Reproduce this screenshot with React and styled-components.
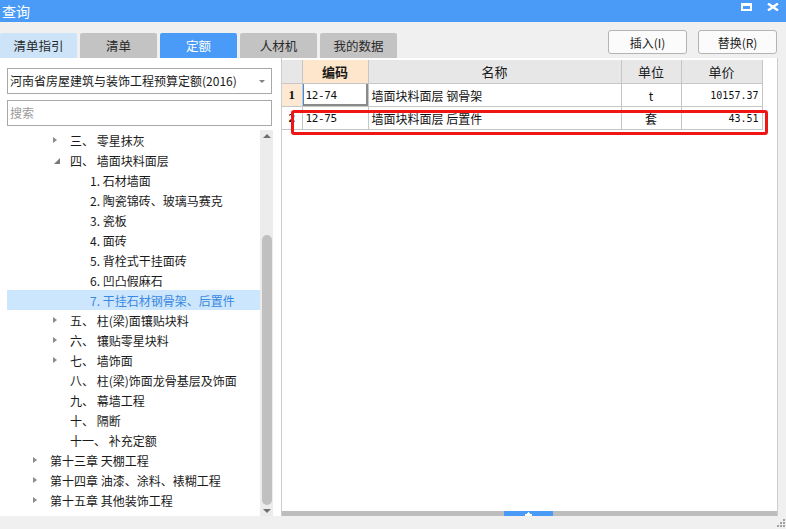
import React from "react";
import styled, { createGlobalStyle } from "styled-components";

const GlobalStyle = createGlobalStyle`
  body {
    margin: 0;
    background: #f0f0f0;
    font-family: "Noto Sans CJK SC", "Noto Sans", sans-serif;
    color: #1a1a1a;
  }
`;

const BLUE = "#4a9bf8";

const treeData = [
  { level: 2, label: "三、 零星抹灰", arrow: "closed" },
  { level: 2, label: "四、 墙面块料面层", arrow: "open" },
  { level: 3, label: "1. 石材墙面" },
  { level: 3, label: "2. 陶瓷锦砖、玻璃马赛克" },
  { level: 3, label: "3. 瓷板" },
  { level: 3, label: "4. 面砖" },
  { level: 3, label: "5. 背栓式干挂面砖" },
  { level: 3, label: "6. 凹凸假麻石" },
  { level: 3, label: "7. 干挂石材钢骨架、后置件", selected: true },
  { level: 2, label: "五、 柱(梁)面镶贴块料", arrow: "closed" },
  { level: 2, label: "六、 镶贴零星块料", arrow: "closed" },
  { level: 2, label: "七、 墙饰面", arrow: "closed" },
  { level: 2, label: "八、 柱(梁)饰面龙骨基层及饰面" },
  { level: 2, label: "九、 幕墙工程" },
  { level: 2, label: "十、 隔断" },
  { level: 2, label: "十一、 补充定额" },
  { level: 1, label: "第十三章 天棚工程", arrow: "closed" },
  { level: 1, label: "第十四章 油漆、涂料、裱糊工程", arrow: "closed" },
  { level: 1, label: "第十五章 其他装饰工程", arrow: "closed" },
];

const rows = [
  { no: 1, code: "12-74", name: "墙面块料面层 钢骨架", unit: "t", price: "10157.37", current: true },
  { no: 2, code: "12-75", name: "墙面块料面层 后置件", unit: "套", price: "43.51" },
];

const tabs = [
  { label: "清单指引", kind: "soft" },
  { label: "清单" },
  { label: "定额", kind: "active" },
  { label: "人材机" },
  { label: "我的数据" },
];

const App = () => {
  return (
    <>
      <GlobalStyle />
      <Window>
        <TitleBar>
          <Title>查询</Title>
          <TitleIcons>
            <svg width="11" height="8" viewBox="0 0 11 8">
              <rect x="1" y="1.5" width="9" height="5.5" fill="none" stroke="#fff" strokeWidth="2" />
              <rect x="0" y="0" width="11" height="3" fill="#fff" />
            </svg>
            <svg width="12" height="8" viewBox="0 0 12 8">
              <path d="M1 0.5 L11 7.5 M11 0.5 L1 7.5" stroke="#fff" strokeWidth="2.4" />
            </svg>
          </TitleIcons>
        </TitleBar>

        <Toolbar>
          <Tabs>
            {tabs.map((t) => (
              <Tab key={t.label} $kind={t.kind}>
                {t.label}
              </Tab>
            ))}
          </Tabs>
          <Actions>
            <Button>插入(I)</Button>
            <Button>替换(R)</Button>
          </Actions>
        </Toolbar>

        <Body>
          <LeftPanel>
            <Combo>
              <span>河南省房屋建筑与装饰工程预算定额(2016)</span>
              <ComboArrow />
            </Combo>
            <Search>搜索</Search>
            <TreeArea>
              <TreeList>
                {treeData.map((n) => (
                  <TreeRow key={n.label} $level={n.level} $selected={n.selected}>
                    <ArrowSlot>
                      {n.arrow === "closed" && <Closed />}
                      {n.arrow === "open" && <Opened />}
                    </ArrowSlot>
                    {n.label}
                  </TreeRow>
                ))}
              </TreeList>
              <VScroll>
                <ScrollUp />
                <VTrack>
                  <VThumb />
                </VTrack>
                <ScrollDown />
              </VScroll>
            </TreeArea>
          </LeftPanel>

          <RightPanel>
            <Grid>
              <colgroup>
                <col width="20" />
                <col width="66" />
                <col width="253" />
                <col width="60" />
                <col width="81" />
              </colgroup>
              <thead>
                <tr>
                  <HeadCell />
                  <HeadCell $accent>编码</HeadCell>
                  <HeadCell>名称</HeadCell>
                  <HeadCell>单位</HeadCell>
                  <HeadCell>单价</HeadCell>
                </tr>
              </thead>
              <tbody>
                {rows.map((r) => (
                  <tr key={r.no}>
                    <RowNo $current={r.current}>{r.no}</RowNo>
                    <CodeCell $focused={r.current}>{r.code}</CodeCell>
                    <Cell>{r.name}</Cell>
                    <Cell $align="center">{r.unit}</Cell>
                    <NumCell>{r.price}</NumCell>
                  </tr>
                ))}
              </tbody>
            </Grid>
            <Highlight />
            <HScroll>
              <HThumb>
                <svg width="7" height="4" viewBox="0 0 7 4">
                  <path d="M3 0 H4 V1 H5 V2 H7 V4 H0 V2 H2 V1 H3 Z" fill="#fff" />
                </svg>
              </HThumb>
            </HScroll>
          </RightPanel>
        </Body>

        <Footer>
          <svg width="10" height="10" viewBox="0 0 10 10">
            <rect x="7" y="1" width="2" height="2" fill="#a0a0a0" />
            <rect x="4" y="4" width="2" height="2" fill="#a0a0a0" />
            <rect x="7" y="4" width="2" height="2" fill="#a0a0a0" />
            <rect x="1" y="7" width="2" height="2" fill="#a0a0a0" />
            <rect x="4" y="7" width="2" height="2" fill="#a0a0a0" />
            <rect x="7" y="7" width="2" height="2" fill="#a0a0a0" />
          </svg>
        </Footer>
      </Window>
    </>
  );
};

const Window = styled.div`
  width: 786px;
  height: 529px;
  display: flex;
  flex-direction: column;
  background: #f0f0f0;
  overflow: hidden;
`;

const TitleBar = styled.div`
  height: 22px;
  flex: none;
  background: ${BLUE};
  display: flex;
  align-items: center;
  justify-content: space-between;
  padding: 0 7px 0 2px;
`;

const Title = styled.div`
  color: #fff;
  font-size: 14px;
  line-height: 22px;
`;

const TitleIcons = styled.div`
  display: flex;
  align-items: center;
  gap: 15px;
  margin-top: -8px;
`;

const Toolbar = styled.div`
  height: 36px;
  flex: none;
  display: flex;
  justify-content: space-between;
  align-items: flex-end;
  padding-right: 9px;
`;

const Tabs = styled.div`
  display: flex;
  gap: 3px;
`;

const tabBg = { soft: "#cde4f8", active: BLUE };

const Tab = styled.div`
  width: 77px;
  height: 25px;
  border-radius: 2px 2px 0 0;
  background: ${(p) => tabBg[p.$kind] || "#c3c3c3"};
  color: ${(p) => (p.$kind === "active" ? "#fff" : "#2a2a2a")};
  font-size: 12.5px;
  line-height: 25px;
  text-align: center;
`;

const Actions = styled.div`
  display: flex;
  gap: 11px;
  align-self: flex-start;
  margin-top: 8px;
`;

const Button = styled.button`
  width: 79px;
  height: 24px;
  border: 1px solid #b4b4b4;
  border-radius: 3px;
  background: #fbfbfb;
  font-family: "Noto Sans CJK SC", "Noto Sans", sans-serif;
  font-size: 12px;
  color: #222;
  padding: 0;
`;

const Body = styled.div`
  flex: 1;
  display: flex;
  min-height: 0;
  padding-right: 8px;
`;

const LeftPanel = styled.div`
  width: 281px;
  flex: none;
  background: #fff;
  display: flex;
  flex-direction: column;
  padding: 10px 8px 0 7px;
  box-sizing: border-box;
`;

const Field = styled.div`
  height: 26px;
  border: 1px solid #a8a8a8;
  box-sizing: border-box;
  font-size: 12px;
  line-height: 24px;
  padding-left: 2px;
  margin-right: 1px;
`;

const Combo = styled(Field)`
  display: flex;
  justify-content: space-between;
  align-items: center;
  color: #1a1a1a;
  padding-right: 6px;
`;

const ComboArrow = styled.span`
  width: 0;
  height: 0;
  border-left: 3px solid transparent;
  border-right: 3px solid transparent;
  border-top: 3px solid #808080;
`;

const Search = styled(Field)`
  margin-top: 6px;
  color: #9a9a9a;
`;

const TreeArea = styled.div`
  flex: 1;
  display: flex;
  margin-top: 4px;
  min-height: 0;
`;

const TreeList = styled.div`
  flex: 1;
  overflow: hidden;
`;

const TreeRow = styled.div`
  height: 20px;
  display: flex;
  align-items: center;
  padding-left: ${(p) => p.$level * 20 + 7}px;
  font-size: 12px;
  white-space: pre;
  background: ${(p) => (p.$selected ? "#cce6fd" : "transparent")};
  color: ${(p) => (p.$selected ? "#3a88e0" : "#1a1a1a")};
`;

const ArrowSlot = styled.span`
  width: 16px;
  flex: none;
  display: flex;
  align-items: center;
`;

const Closed = styled.span`
  width: 0;
  height: 0;
  margin-left: -1px;
  border-top: 3px solid transparent;
  border-bottom: 3px solid transparent;
  border-left: 4px solid #8a8a8a;
`;

const Opened = styled.span`
  width: 0;
  height: 0;
  margin-top: 2px;
  border-left: 6px solid transparent;
  border-bottom: 6px solid #7a7a7a;
`;

const VScroll = styled.div`
  width: 13px;
  flex: none;
  background: #ececec;
  display: flex;
  flex-direction: column;
  align-items: center;
`;

const ScrollUp = styled.span`
  margin: 4px 0 0;
  width: 0;
  height: 0;
  border-left: 4px solid transparent;
  border-right: 4px solid transparent;
  border-bottom: 4px solid #707070;
`;

const ScrollDown = styled.span`
  margin: 2px 0 3px;
  width: 0;
  height: 0;
  border-left: 4px solid transparent;
  border-right: 4px solid transparent;
  border-top: 4px solid #707070;
`;

const VTrack = styled.div`
  flex: 1;
  width: 100%;
  display: flex;
  flex-direction: column;
  justify-content: flex-end;
  align-items: center;
  padding-bottom: 2px;
`;

const VThumb = styled.div`
  width: 10px;
  height: 270px;
  border-radius: 5px;
  background: #c0c0c0;
`;

const RightPanel = styled.div`
  position: relative;
  flex: 1;
  background: #fff;
  border-left: 1px solid #cdcdcd;
  border-right: 1px solid #cdcdcd;
  padding-top: 2px;
  display: flex;
  flex-direction: column;
`;

const Grid = styled.table`
  border-collapse: collapse;
  table-layout: fixed;
  width: 480px;
`;

const HeadCell = styled.th`
  height: 23px;
  padding: 0;
  border: 1px solid #c6c6c6;
  border-top: none;
  border-left: none;
  background: ${(p) => (p.$accent ? "#fde6cb" : "#e7e7e7")};
  font-size: 13px;
  font-weight: ${(p) => (p.$accent ? 700 : 400)};
  color: #1a1a1a;
  text-align: center;
`;

const Cell = styled.td`
  height: 22px;
  padding: 0 3px;
  border: 1px solid #c6c6c6;
  font-size: 12px;
  color: #111;
  text-align: ${(p) => p.$align || "left"};
  white-space: nowrap;
  overflow: hidden;
`;

const RowNo = styled(Cell)`
  border-left: none;
  padding: 0;
  text-align: center;
  background: ${(p) => (p.$current ? "#fde9d3" : "#fff")};
  font-family: "Liberation Serif", serif;
  font-weight: 700;
  font-size: 13px;
`;

const CodeCell = styled(Cell)`
  font-family: "DejaVu Sans Mono", monospace;
  font-size: 11px;
  letter-spacing: -0.4px;
  ${(p) =>
    p.$focused &&
    `
    box-shadow: inset 1px 0 0 #3c8ce6, inset -2px -2px 0 #8a8a8a;
  `}
`;

const NumCell = styled(Cell)`
  font-family: "DejaVu Sans Mono", monospace;
  font-size: 10px;
  text-align: right;
  padding-right: 3px;
`;

const Highlight = styled.div`
  position: absolute;
  left: 9px;
  top: 52px;
  width: 477px;
  height: 25px;
  box-sizing: border-box;
  border: 3px solid #f01515;
  border-radius: 3px;
  pointer-events: none;
`;

const HScroll = styled.div`
  margin-top: auto;
  height: 5px;
  background: #bdbdbd;
  display: flex;
  padding-left: 222px;
`;

const HThumb = styled.div`
  width: 49px;
  background: ${BLUE};
  display: flex;
  justify-content: center;
  align-items: flex-end;
`;

const Footer = styled.div`
  height: 12px;
  flex: none;
  display: flex;
  justify-content: flex-end;
  align-items: flex-end;
  padding: 0 0 1px 0;
`;

export default App;
